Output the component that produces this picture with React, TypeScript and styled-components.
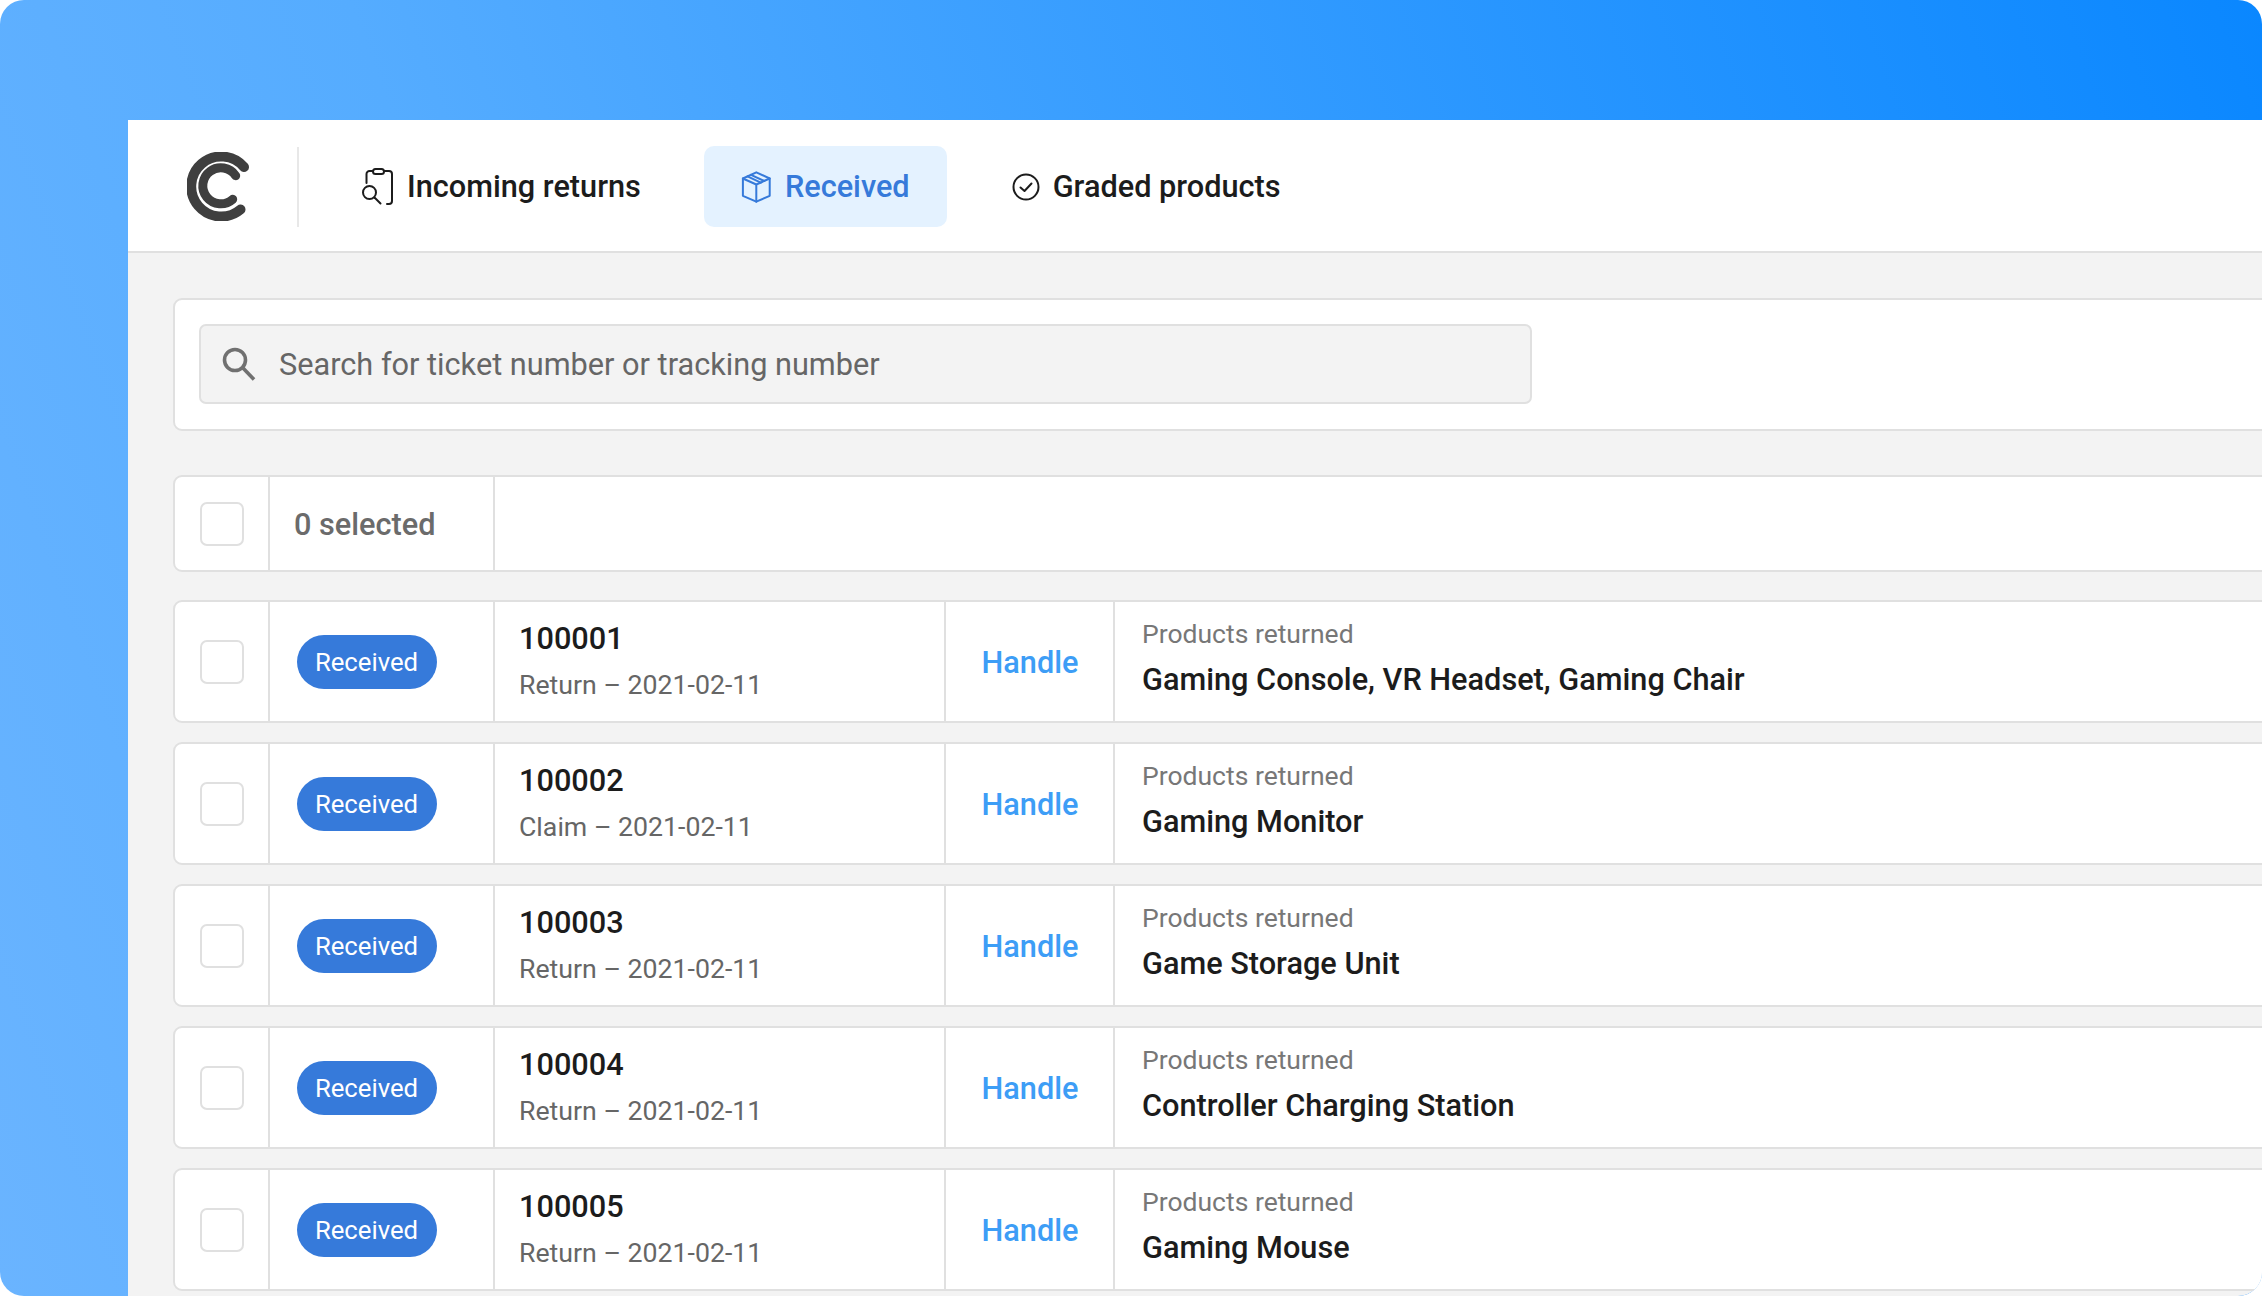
import React from 'react';
import styled, { createGlobalStyle } from 'styled-components';

const GlobalStyle = createGlobalStyle`
  html, body {
    margin: 0;
    padding: 0;
    background: #fff;
  }
  body {
    font-family: Roboto, "Liberation Sans", sans-serif;
    -webkit-font-smoothing: antialiased;
  }
`;

const Frame = styled.div`
  width: 2262px;
  height: 1296px;
  box-sizing: border-box;
  padding: 120px 0 0 128px;
  border-radius: 24px;
  overflow: hidden;
  background: linear-gradient(70deg, #6ab4ff 0%, #55acff 30%, #0a87ff 100%);
`;

const Panel = styled.div`
  height: 1176px;
  background: #f3f3f3;
  overflow: hidden;
`;

const Header = styled.header`
  display: flex;
  align-items: center;
  height: 133px;
  box-sizing: border-box;
  background: #fff;
  border-bottom: 2px solid #e0e0e0;
  padding: 2px 0 0 59px;
`;

const LogoWrap = styled.div`
  display: flex;
  align-items: center;
  box-sizing: border-box;
  width: 112px;
  height: 80px;
  border-right: 2px solid #e8e8e8;
`;

const Tabs = styled.nav`
  display: flex;
  align-items: center;
  gap: 27px;
  margin-left: 27px;
`;

const Tab = styled.div<{ $active?: boolean }>`
  display: flex;
  align-items: center;
  gap: 13px;
  height: 81px;
  margin-right: ${p => (p.$active ? '2px' : '0')};
  padding: ${p => (p.$active ? '0 37px 0 36px' : '0 36px')};
  border-radius: 10px;
  font-size: 30.7px;
  font-weight: 500;
  white-space: nowrap;
  color: ${p => (p.$active ? '#367ada' : '#1c1c1c')};
  background: ${p => (p.$active ? '#e4f2ff' : 'transparent')};
`;

const Content = styled.main`
  display: flex;
  flex-direction: column;
  padding: 45px 0 0 45px;
`;

const SearchCard = styled.section`
  box-sizing: border-box;
  height: 133px;
  margin-right: -40px;
  padding: 24px;
  background: #fff;
  border: 2px solid #e0e0e0;
  border-radius: 9px;
`;

const SearchBox = styled.div`
  display: flex;
  align-items: center;
  gap: 23px;
  box-sizing: border-box;
  width: 1333px;
  height: 80px;
  padding-left: 21px;
  background: #f3f3f3;
  border: 2px solid #e0e0e0;
  border-radius: 7px;
  font-size: 30.7px;
  color: #666;
`;

const Row = styled.div<{ $h: number; $mb: number }>`
  display: flex;
  flex: none;
  box-sizing: border-box;
  height: ${p => p.$h}px;
  margin: 0 -40px ${p => p.$mb}px 0;
  background: #fff;
  border: 2px solid #e0e0e0;
  border-radius: 9px;
`;

const TopRow = styled(Row)`
  margin-top: 44px;
`;

const CheckCell = styled.div`
  display: flex;
  align-items: center;
  justify-content: center;
  flex: none;
  width: 95px;
  box-sizing: border-box;
  border-right: 2px solid #e0e0e0;
`;

const Checkbox = styled.span`
  display: block;
  box-sizing: border-box;
  width: 44px;
  height: 44px;
  border: 2px solid #e0e0e0;
  border-radius: 7px;
`;

const StatusCell = styled.div`
  display: flex;
  align-items: center;
  flex: none;
  width: 225px;
  box-sizing: border-box;
  padding-left: 24px;
  border-right: 2px solid #e0e0e0;
`;

const SelectedText = styled.span`
  padding-top: 1px;
  font-size: 30.7px;
  font-weight: 500;
  color: #6b6b6b;
`;

const Badge = styled.span`
  display: flex;
  align-items: center;
  justify-content: center;
  width: 140px;
  height: 54px;
  margin-left: 3px;
  padding-right: 1px;
  box-sizing: border-box;
  border-radius: 27px;
  background: #367ada;
  color: #fff;
  font-size: 25.7px;
`;

const TicketCell = styled.div`
  display: flex;
  flex-direction: column;
  flex: none;
  width: 451px;
  box-sizing: border-box;
  padding: 17px 0 0 24px;
  border-right: 2px solid #e0e0e0;
`;

const TicketNo = styled.span`
  font-size: 30.7px;
  line-height: 40px;
  font-weight: 500;
  color: #1c1c1c;
`;

const TicketMeta = styled.span`
  margin-top: 8px;
  font-size: 26.7px;
  line-height: 36px;
  color: #666;
`;

const HandleCell = styled.div`
  display: flex;
  align-items: center;
  justify-content: center;
  flex: none;
  width: 169px;
  box-sizing: border-box;
  padding: 1px 0 0 1px;
  border-right: 2px solid #e0e0e0;
  font-size: 30.7px;
  font-weight: 500;
  color: #3d9df6;
`;

const ProductsCell = styled.div`
  display: flex;
  flex-direction: column;
  padding: 14px 0 0 27px;
`;

const ProductsLabel = styled.span`
  font-size: 26.5px;
  line-height: 36px;
  color: #777;
`;

const ProductsName = styled.span`
  margin-top: 8px;
  font-size: 30.7px;
  line-height: 40px;
  font-weight: 500;
  color: #1c1c1c;
`;

const Logo = () => (
  <svg width="63" height="69" viewBox="0 0 63 69" fill="none" stroke="#3f3f3f" strokeLinecap="round">
    <path d="M57 15 A30 30 0 1 0 53.500 57.500" strokeWidth="10" />
    <path d="M48.700 23.700 A18 18 0 1 0 45.700 47.300" strokeWidth="9" />
  </svg>
);

const ClipboardIcon = () => (
  <svg width="32" height="38" viewBox="0 0 32 38" fill="none" stroke="#1c1c1c" strokeWidth="2" strokeLinecap="round" strokeLinejoin="round">
    <path d="M4.500 15V6a3 3 0 0 1 3-3H11M22 3h5a3 3 0 0 1 3 3v27a3 3 0 0 1-3 3h-2" />
    <rect x="11" y="1" width="11" height="5" rx="2.500" />
    <circle cx="7.500" cy="24.500" r="6.500" />
    <path d="M12.500 29.500 L18.500 35.500" />
  </svg>
);

const BoxIcon = () => (
  <svg width="32" height="32" viewBox="0 0 32 32" fill="none" stroke="#367ada" strokeWidth="2" strokeLinecap="round" strokeLinejoin="round">
    <path d="M16.300 1.300 L29.700 7.500 V24.800 L16.300 30.700 L2.900 24.800 V7.500 Z" />
    <path d="M2.900 7.500 L16.300 13.500 L29.700 7.500 M16.300 13.500 V30.700" />
    <path d="M11 3.800 L24.300 10 M7.500 5.400 L20.800 11.600" />
  </svg>
);

const CheckIcon = () => (
  <svg width="28" height="28" viewBox="0 0 28 28" fill="none" stroke="#1c1c1c" strokeWidth="2" strokeLinecap="round" strokeLinejoin="round">
    <circle cx="14" cy="14" r="12.500" />
    <path d="M8.500 14.500 L12.500 18 L19.500 10.500" />
  </svg>
);

const SearchIcon = () => (
  <svg width="34" height="34" viewBox="0 0 34 34" fill="none" stroke="#707070" strokeWidth="3.600">
    <circle cx="13" cy="13" r="10.500" />
    <path d="M20.500 20.500 L32 32.500" />
  </svg>
);

const tickets = [
  { no: '100001', kind: 'Return', products: 'Gaming Console, VR Headset, Gaming Chair' },
  { no: '100002', kind: 'Claim', products: 'Gaming Monitor' },
  { no: '100003', kind: 'Return', products: 'Game Storage Unit' },
  { no: '100004', kind: 'Return', products: 'Controller Charging Station' },
  { no: '100005', kind: 'Return', products: 'Gaming Mouse' },
];

export default function App() {
  return (
    <Frame>
      <GlobalStyle />
      <Panel>
        <Header>
          <LogoWrap>
            <Logo />
          </LogoWrap>
          <Tabs>
            <Tab>
              <ClipboardIcon />
              Incoming returns
            </Tab>
            <Tab $active>
              <BoxIcon />
              Received
            </Tab>
            <Tab>
              <CheckIcon />
              Graded products
            </Tab>
          </Tabs>
        </Header>
        <Content>
          <SearchCard>
            <SearchBox>
              <SearchIcon />
              Search for ticket number or tracking number
            </SearchBox>
          </SearchCard>
          <TopRow $h={97} $mb={28}>
            <CheckCell>
              <Checkbox />
            </CheckCell>
            <StatusCell>
              <SelectedText>0 selected</SelectedText>
            </StatusCell>
          </TopRow>
          {tickets.map(t => (
            <Row key={t.no} $h={123} $mb={19}>
              <CheckCell>
                <Checkbox />
              </CheckCell>
              <StatusCell>
                <Badge>Received</Badge>
              </StatusCell>
              <TicketCell>
                <TicketNo>{t.no}</TicketNo>
                <TicketMeta>{t.kind} – 2021-02-11</TicketMeta>
              </TicketCell>
              <HandleCell>Handle</HandleCell>
              <ProductsCell>
                <ProductsLabel>Products returned</ProductsLabel>
                <ProductsName>{t.products}</ProductsName>
              </ProductsCell>
            </Row>
          ))}
        </Content>
      </Panel>
    </Frame>
  );
}
